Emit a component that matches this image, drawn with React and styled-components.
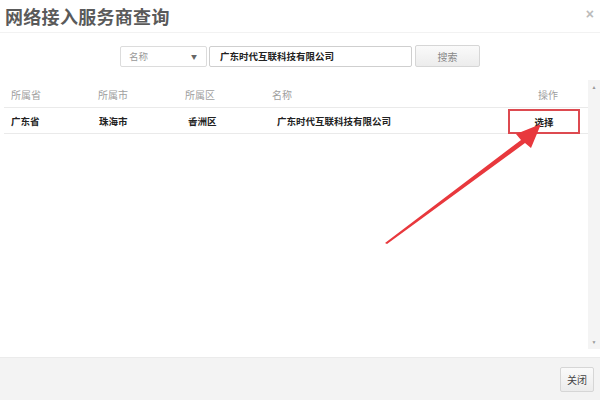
import React from 'react';
import styled, { createGlobalStyle } from 'styled-components';

const GlobalStyle = createGlobalStyle`
  html, body {
    margin: 0;
    padding: 0;
    background: #fff;
  }
  body {
    font-family: 'Liberation Sans', 'Noto Sans CJK SC', sans-serif;
  }
`;

const rows = [
  { province: '广东省', city: '珠海市', district: '香洲区', name: '广东时代互联科技有限公司' },
];

export default function App() {
  return (
    <>
      <GlobalStyle />
      <Dialog>
        <Header>
          <Title>网络接入服务商查询</Title>
          <CloseX>×</CloseX>
        </Header>
        <Body>
          <SearchBar>
            <Select>
              <span>名称</span>
              <Caret>▼</Caret>
            </Select>
            <Input>广东时代互联科技有限公司</Input>
            <Button>搜索</Button>
          </SearchBar>
          <TableArea>
            <Table>
              <HeadRow>
                <Cell>所属省</Cell>
                <Cell>所属市</Cell>
                <Cell>所属区</Cell>
                <Cell>名称</Cell>
                <Cell $center>操作</Cell>
              </HeadRow>
              {rows.map((r) => (
                <DataRow key={r.name}>
                  <Cell>{r.province}</Cell>
                  <Cell $shift={1}>{r.city}</Cell>
                  <Cell $shift={3}>{r.district}</Cell>
                  <Cell $shift={5}>{r.name}</Cell>
                  <Cell $center>
                    <Highlight>选择</Highlight>
                  </Cell>
                </DataRow>
              ))}
            </Table>
            <Scrollbar>
              <ScrollArrow>▲</ScrollArrow>
              <ScrollArrow>▼</ScrollArrow>
            </Scrollbar>
          </TableArea>
        </Body>
        <Footer>
          <Button $small>关闭</Button>
        </Footer>
        <Arrow viewBox="0 0 600 400">
          <polygon
            points="385,243 521,140 516,134 541,124 531,148 525,143 387,244"
            fill="#e8383d"
          />
        </Arrow>
      </Dialog>
    </>
  );
}

const Dialog = styled.div`
  position: relative;
  width: 600px;
  height: 400px;
  display: flex;
  flex-direction: column;
  background: #fff;
  overflow: hidden;
`;

const Header = styled.div`
  height: 33px;
  display: flex;
  align-items: center;
  justify-content: space-between;
  padding: 0 6px 0 5px;
  border-bottom: 1px solid #f2f2f2;
  box-sizing: border-box;
`;

const Title = styled.h1`
  margin: 0;
  font-family: 'Noto Sans CJK SC', sans-serif;
  font-size: 18px;
  font-weight: 700;
  color: #5a5a5a;
  letter-spacing: 0.3px;
`;

const CloseX = styled.span`
  font-size: 14px;
  color: #bbb;
  font-weight: 700;
  margin-top: -4px;
`;

const Body = styled.div`
  flex: 1;
  display: flex;
  flex-direction: column;
`;

const SearchBar = styled.div`
  display: flex;
  justify-content: center;
  align-items: center;
  gap: 2px;
  padding: 11px 0 0 0;
  height: 24px;
`;

const Select = styled.div`
  width: 87px;
  height: 21px;
  box-sizing: border-box;
  border: 1px solid #dcdcdc;
  border-radius: 2px;
  display: flex;
  align-items: center;
  justify-content: space-between;
  padding: 0 9px 0 8px;
  font-family: 'Noto Sans CJK SC', sans-serif;
  font-size: 9.5px;
  color: #999;
`;

const Caret = styled.span`
  font-size: 6px;
  color: #666;
`;

const Input = styled.div`
  width: 203px;
  height: 21px;
  box-sizing: border-box;
  border: 1px solid #cfcfcf;
  border-radius: 2px;
  display: flex;
  align-items: center;
  padding: 0 10px;
  font-family: 'Noto Sans CJK SC', sans-serif;
  font-size: 9.5px;
  font-weight: 700;
  color: #222;
  margin-right: 1px;
`;

const Button = styled.div`
  width: ${(p) => (p.$small ? '34px' : '65px')};
  height: ${(p) => (p.$small ? '25px' : '22px')};
  box-sizing: border-box;
  border: 1px solid #d6d6d6;
  border-radius: 2px;
  background: linear-gradient(#fafafa, #ececec);
  display: flex;
  align-items: center;
  justify-content: center;
  font-family: 'Noto Sans CJK SC', sans-serif;
  font-size: 10px;
  color: ${(p) => (p.$small ? '#444' : '#888')};
`;

const TableArea = styled.div`
  flex: 1;
  display: flex;
  margin-top: 12px;
  margin-bottom: 8px;
`;

const Table = styled.div`
  flex: 1;
  padding-left: 4px;
`;

const Row = styled.div`
  display: grid;
  grid-template-columns: 87px 87px 87px 1fr 80px;
  align-items: center;
  border-bottom: 1px solid #eaeaea;
  font-family: 'Noto Sans CJK SC', sans-serif;
  font-size: 9.5px;
`;

const HeadRow = styled(Row)`
  height: 26px;
  padding-top: 1px;
  color: #a0a0a0;
  font-size: 10px;
`;

const DataRow = styled(Row)`
  height: 25px;
  color: #222;
  font-weight: 700;
`;

const Cell = styled.div`
  padding-left: ${(p) => (p.$center ? 0 : 7 + (p.$shift || 0))}px;
  height: 100%;
  display: flex;
  align-items: center;
  justify-content: ${(p) => (p.$center ? 'center' : 'flex-start')};
`;

const Highlight = styled.div`
  width: 72px;
  height: 25px;
  box-sizing: border-box;
  border: 2px solid #dd4a50;
  display: flex;
  align-items: center;
  justify-content: center;
  margin-left: -8px;
  margin-top: 1px;
`;

const Scrollbar = styled.div`
  width: 12px;
  background: #f4f4f4;
  display: flex;
  flex-direction: column;
  justify-content: space-between;
  align-items: center;
  padding: 4px 0;
`;

const ScrollArrow = styled.span`
  font-size: 5px;
  color: #999;
`;

const Footer = styled.div`
  height: 43px;
  box-sizing: border-box;
  background: #f3f3f3;
  border-top: 1px solid #ebebeb;
  display: flex;
  align-items: center;
  justify-content: flex-end;
  padding: 0 6px 0 0;
`;

const Arrow = styled.svg`
  position: absolute;
  left: 0;
  top: 0;
  width: 600px;
  height: 400px;
  pointer-events: none;
`;
